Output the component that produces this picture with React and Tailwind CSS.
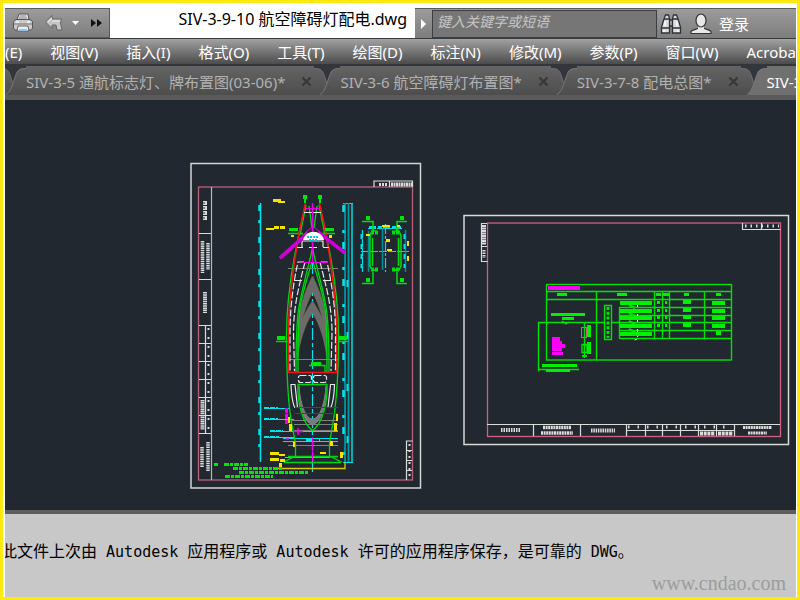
const menus = ['(E)', '视图(V)', '插入(I)', '格式(O)', '工具(T)', '绘图(D)', '标注(N)', '修改(M)', '参数(P)', '窗口(W)', 'Acrobat']

const tabs = [
  { name: 'SIV-3-5 通航标志灯、牌布置图(03-06)*' },
  { name: 'SIV-3-6 航空障碍灯布置图*' },
  { name: 'SIV-3-7-8 配电总图*' },
  { name: 'SIV-3-9', active: true },
]

function PrinterIcon() {
  return (
    <svg width="22" height="22" viewBox="0 0 22 22" fill="none">
      <path d="M5 8 7 2h9l1 6" fill="#e2e2e2" stroke="#555" />
      <path d="M8 4h6M7 6h8" stroke="#888" />
      <path d="M1.500 9.500 4 7.500h14l2.500 2v7l-2 1.500h-15l-2-1.500z" fill="#cacaca" stroke="#555" />
      <path d="M2 12h18" stroke="#777" />
      <path d="M4 10h3M15 10h3" stroke="#eee" strokeWidth="2" />
      <path d="M6 14h10l1 5H5z" fill="#eee" stroke="#666" />
      <path d="M7 18h8" stroke="#8fc7ee" strokeWidth="2" />
    </svg>
  )
}

function UndoIcon() {
  return (
    <svg width="20" height="20" viewBox="0 0 20 20" fill="none">
      <path d="M1.500 9 8 2.500V6h9.500l-1 4 1.500 7h-5l-1-5H8v3.500z" fill="#c4c4c4" stroke="#666" />
      <path d="M4 9l4-4M8 8h8" stroke="#eee" />
    </svg>
  )
}

function BinocularsIcon() {
  return (
    <svg width="22" height="22" viewBox="0 0 22 22" fill="#dcdcdc" stroke="#2e3238" strokeWidth="1.300">
      <path d="M8 7h6v6H8z" fill="#aaa" />
      <path d="M4 6 5.500 2h3L9.500 6v14H1.500v-6z" />
      <path d="M18 6 16.500 2h-3L12.500 6v14h8v-6z" />
      <path d="M2 15h7.500M12.500 15h8M4 6h5.500M12.500 6H18" fill="none" />
      <path d="M5 8v5M17 8v5M4 17v2M18 17v2" stroke="#fff" />
    </svg>
  )
}

function UserIcon() {
  return (
    <svg width="22" height="22" viewBox="0 0 22 22" fill="#e8e8e8" stroke="#333" strokeWidth="1.200">
      <path d="M1 20.500v-2c1.500-2 4.500-2 6.500-3h7c2 1 5 1 6.500 3v2z" />
      <path d="M8 12h6v4l-3 2-3-2z" stroke="none" />
      <ellipse cx="11" cy="7.500" rx="5" ry="6.500" />
    </svg>
  )
}

// dark notch between two document tabs
function TabNotch({ active }) {
  return (
    <svg className="shrink-0" width="26" height="31" viewBox="0 0 26 31" fill="none">
      {active && <path d="M26 3c-8 0-9 3-11 9-3 8-4 14-9 19h20z" fill="#707070" />}
      <path d="M0 0h26v3c-8 0-9 3-11 9l-2 5-2-5C9 6 8 3 0 3z" fill="#33363b" />
      <path d="M26 3.500c-8 0-9 3-11 9-3 8-4 14-9 17" stroke="#797979" />
      <path d="M0 3.500c8 0 9 3 11 9l1 5" stroke="#6c6c6c" />
    </svg>
  )
}

function CloseIcon() {
  return (
    <svg width="11" height="11" viewBox="0 0 11 11" stroke="#383838" strokeWidth="2.400">
      <path d="M1.500 1.500l8 8M9.500 1.500l-8 8" />
    </svg>
  )
}

// bars: [x, y, width, height]
function Bars({ items, fill }) {
  return items.map(([x, y, w, h], i) => <rect key={i} x={x} y={y} width={w} height={h} fill={fill} />)
}

const elevationNotes = [
  [214, 463, 4, 3], [224, 463, 24, 3], [233, 467, 50, 3], [239, 471, 70, 3], [225, 475, 48, 3],
]
const yellowLabels = [
  [273, 199, 8, 3], [278, 201, 7, 2], [266, 228, 8, 2], [274, 226, 5, 3], [280, 226, 5, 3],
  [270, 452, 9, 3], [279, 454, 6, 2], [270, 458, 9, 3], [280, 459, 5, 3], [279, 463, 3, 4],
  [288, 417, 2, 6], [289, 424, 3, 7], [293, 442, 2, 5], [336, 414, 2, 7], [334, 423, 3, 8],
  [330, 441, 3, 5], [320, 452, 6, 2], [340, 452, 3, 6],
]

function TowerSheet() {
  return (
    <g fill="none">
      <rect x="191" y="163.500" width="229.500" height="324.500" stroke="#d4d4d4" strokeWidth="1.500" />
      <rect x="198.500" y="187" width="214" height="293" stroke="#b8607a" strokeWidth="1.300" />

      {/* title block */}
      <g stroke="#dcdcdc" strokeWidth="1.200">
        <path d="M211.500 187v293" stroke="#b8b8b8" />
        <path d="M199 233.500h12M199 279.500h12M199 325.500h12M199 343.500h12M199 361.500h12M199 379.500h12M199 397.500h12M199 415.500h12M199 433.500h12M205.500 325v108" />
        <path d="M374 187v-6h38.500v6M389.500 181v6" />
        <path d="M406.500 480v-39h6M406 450.500h6M406 460.500h6M406 470.500h6" />
        <path d="M204 201v19" strokeWidth="2" strokeDasharray="1.500 1" />
        <path d="M206 201v19" strokeWidth="2" strokeDasharray="4 1" />
        <path d="M202.500 241v32M208 243v27" strokeWidth="3.500" strokeDasharray="1.500 .7" />
        <path d="M205 292v21" strokeWidth="4" strokeDasharray="1.500 .7" />
        <path d="M202.500 400v30" strokeWidth="4" strokeDasharray="1.500 .6" />
        <path d="M202 447v20M208 442v30" strokeWidth="3.500" strokeDasharray="1.500 .8" />
        <path d="M208.500 328v104" strokeWidth="2" strokeDasharray="2 7" />
        <path d="M379 184.500h8" strokeWidth="3" strokeDasharray="2 1" />
        <path d="M391 184.500h21" strokeWidth="4" strokeDasharray="2 .5" />
        <path d="M409.500 444v34" strokeWidth="2" strokeDasharray="2 4" />
      </g>

      {/* height dimensions */}
      <g stroke="#00e5ec">
        <path d="M260.500 203v259" strokeWidth="1.500" />
        <path d="M259.500 205v255" strokeWidth="2.500" strokeDasharray="6 9 3 14" />
        <path d="M343 203.500h10M343 462.500h10" />
        <path d="M345 203v259M348.500 203v259" stroke="#009aa2" strokeWidth="1.700" />
        <path d="M352 203v259" strokeWidth="1.400" />
        <path d="M343.500 205v255" strokeWidth="2.500" strokeDasharray="7 18 3 9" />
        <path d="M347.500 280v170" strokeWidth="2" strokeDasharray="7 45" />
        <path d="M312.500 262v210" strokeDasharray="12 3 4 3" strokeWidth="1.200" />
        <path d="M264 408.500h26M264 419.500h30M270 431.500h68M264 437.500h30M283 441.500h55M283 438.500h55M285 457.500h45" />
        <path d="M264 408h14M264 419h14M270 431h13M264 437h15" strokeWidth="2" strokeDasharray="5 1" />
        <path d="M306 440h14M290 457h40" strokeWidth="2" strokeDasharray="7 6" />
      </g>

      <g stroke="#808080">
        <path d="M288 268.500h50M288 359.500h50M292 420.500h46M294 424.500h44M294 430.500h44M288 445.500h50" />
        <path d="M312.500 276C306 289 300 304 298 324v14c3-15 7-32 14.500-46C320 306 324 323 327 338v-14c-2-20-8-35-14.500-48z" fill="#6b6b6b" stroke="#76764a" strokeWidth=".6" />
        <path d="M312.500 301C305 312 299 324 297.500 337v22c2-17 7-34 15-46 8 12 12.500 29 14.500 46v-22c-1.500-13-7-25-14.500-36z" fill="#6b6b6b" stroke="#76764a" strokeWidth=".6" />
        <path d="M299 386c0 20 5 38 13.500 38S326 406 326 386c-1 16-6 33-13.500 33S300 402 299 386z" fill="#7c7c7c" />
      </g>

      {/* hull */}
      <g stroke="#00d610" strokeWidth="1.300">
        <path d="M305 208c-7 28-18.500 82-18.500 127 0 32 1 64 5 88l4 20v13l-12 6" />
        <path d="M320 208c7 28 18.500 82 18.500 127 0 32-1.500 64-5.500 88l-3.500 20v13l12 6" />
        <path d="M312.500 248c-3 15-12 46-14 62-2 14-2.500 25-2.500 62M312.500 248c3 15 12 46 14 62 2 14 2.500 25 2.500 62" />
        <path d="M312 262c-3 10-10 32-12 46-2 16-2 40-2 64M313 262c3 10 10 32 12 46 2 16 2 40 2 64" />
        <path d="M309 206l3 22M317 206l-3 22M306 205l-6 30M319 205l6 30" />
        <path d="M298 384.500h29c1 18-5 40-14.500 46-9.500-6-15.500-28-14.500-46z" />
        <path d="M284 462.500h57M288 456.500h50M276 341.500h12M338 341.500h10M288 233.500h15M322 233.500h13" />
        <path d="M309 365.500h16v7" />
      </g>
      <path d="M305.500 203C296 243 288.500 296 288.500 333v39.500h48V333c0-37-7.500-90-17-130" stroke="#f21414" strokeWidth="1.600" />

      <g stroke="#e6e6e6" strokeWidth="1.200">
        <path d="M304 212.500h17M302 247v-6h21v6M297 247.500h6M323 247.500h6M309 247.500h8" />
        <path d="M304 262h-6c-5 22-8 47-8 71v38M321 262h6c5 22 8.500 47 8.500 71v38" strokeDasharray="7 2" />
        <path d="M305 262c-6 24-11.500 44-11.500 71l1 38M320 262c6 24 12 44 12 71l-1 38" strokeDasharray="7 2" />
        <path d="M294 280.500h8M323 280.500h8" />
        <rect x="298.500" y="375.500" width="13" height="7" rx="2" strokeDasharray="6 2" />
        <rect x="313.500" y="375.500" width="13" height="7" rx="2" strokeDasharray="6 2" />
        <path d="M291 384.500h4l2.500 23h-2.500c-2-2-4-15-4-23zM334.500 384.500h-4l-2.500 23h2.500c2-2 4-15 4-23z" />
      </g>

      {/* beacon */}
      <g stroke="#ec00ec">
        <path d="M280 258l28-25M345 253l-27-21" stroke="#b000b8" strokeWidth="4" />
        <path d="M280 258l28-25M345 253l-27-21" strokeDasharray="1 1" strokeWidth="3" />
        <path d="M312.500 203v59" strokeWidth="1.500" />
        <path d="M302 262.500h26M306 208.500h14M312.500 437v24M303 235l10-9 10 9" />
        <path d="M295 407.500h43M295 413.500h43" stroke="#a800a8" />
        <path d="M286.500 408v16" strokeWidth="3" strokeDasharray="5 1" />
        <path d="M294 431.500h9M298 428v7M286 439h3" strokeWidth="1.500" />
      </g>
      <path d="M303 240c3-11 18-11 21 0z" fill="#fff" />
      <path d="M307 237h12M309 240h8" stroke="#00ccdd" strokeWidth="2" strokeDasharray="2 1" />

      <Bars items={yellowLabels} fill="#f5e400" />
      <Bars items={[[291, 235, 3, 2], [329, 235, 3, 3]]} fill="#f5e400" />
      <path d="M278 468.500h67v-6" stroke="#d8cc00" strokeWidth="1.300" />
      <Bars items={[[289, 228, 9, 3], [325, 228, 9, 3], [277, 336, 8, 4], [339, 336, 8, 4], [303, 195, 4, 4], [304, 199, 2, 4], [318, 195, 4, 4], [319, 199, 2, 4], [311, 362, 10, 4]]} fill="#00e608" />
      {elevationNotes.map(([x, y, w, h]) => (
        <path key={y + '-' + x} d={`M${x} ${y + 1.5}h${w}`} stroke="#00e608" strokeWidth={h} strokeDasharray="5 1 3 1" />
      ))}

      {/* plan section */}
      <g stroke="#00dfe8" strokeWidth="1.200">
        <path d="M368 228.500h34M361 251.500h48M362.500 230v42" strokeDasharray="8 1" />
        <path d="M368.500 231v41M382.500 228v42M405.500 230v42" stroke="#00909a" strokeWidth="1.500" />
        <path d="M385.500 224v48" strokeDasharray="10 2 3 2" />
        <path d="M369 227.500h32" strokeWidth="3" strokeDasharray="7 2 4 1" />
        <path d="M361.500 234v34M404.500 234v34" strokeWidth="2" strokeDasharray="5 5" />
      </g>
      <g stroke="#00dc0c" strokeWidth="1.500">
        <path d="M362 221.500h11V231M407 221.500H397V231M362 283.500h11V272M407 283.500H397V272" />
        <path d="M375 231h-3l-2 5v30l2 4h3M395 231h4l2 5v30l-2 4h-4M372.500 238v28M398.500 238v28" />
        <path d="M371 232.500h8M392 232.500h8M371 269.500h8M392 269.500h8" strokeWidth="4" strokeDasharray="3 1" />
      </g>
      <Bars items={[[366, 216, 4, 4], [400, 216, 4, 4], [366, 278, 4, 4], [400, 278, 4, 4]]} fill="#00e608" />
      <Bars items={[[382, 225, 8, 2], [386, 239, 4, 3], [387, 249, 5, 2], [407, 241, 2, 5], [407, 256, 2, 5], [366, 234, 4, 2], [397, 225, 3, 2]]} fill="#f5e400" />
    </g>
  )
}

const rowTops = [301, 309, 316, 324, 332]

function WiringSheet() {
  return (
    <g fill="none">
      <rect x="464" y="215.500" width="324.500" height="229" stroke="#d8d8d8" strokeWidth="1.500" />
      <rect x="487.500" y="223" width="293" height="213.500" stroke="#cf6080" strokeWidth="1.300" />
      <g stroke="#dcdcdc" strokeWidth="1.200">
        <path d="M487 223.500h-5.500v38h6M481 246.500h6M742.500 223v6.500h38M761.500 223v6" />
        <path d="M487 424.500h293M533.500 424v12M580.500 424v12M626.500 424v12M626 430.500h108M645.500 424v12M662.500 424v12M680.500 424v12M698.500 424v12M716.500 424v12M734.500 424v12" />
        <path d="M484 225v20" strokeWidth="4" strokeDasharray="2 .5" />
        <path d="M484 250v8" strokeWidth="3" strokeDasharray="1.500 1" />
        <path d="M745 226h34" strokeWidth="3" strokeDasharray="1.500 4" />
        <path d="M501 430h19" strokeWidth="4" strokeDasharray="1.500 1" />
        <path d="M543 427.500h28M541 433h32" strokeWidth="3.500" strokeDasharray="2 .6" />
        <path d="M591 430.500h24" strokeWidth="4" strokeDasharray="1.500 .8" />
        <path d="M628 427h104" strokeWidth="3" strokeDasharray="1.500 8" />
        <path d="M700 433.500h15M718 433.500h15" strokeWidth="4" strokeDasharray="3 .7" />
        <path d="M743 427.500h29M748 433h19" strokeWidth="3" strokeDasharray="2 .6" />
      </g>
      <g stroke="#00e200" strokeWidth="1.400">
        <rect x="546.500" y="284.500" width="185" height="75.500" />
        <path d="M546 291.500h185M546 299.500h185M596.500 291v69M654.500 291v47M662.500 291v47M669.500 291v47M704.500 291v47" />
        <path d="M619 307.500h112M619 315.500h112M619 322.500h112M619 330.500h112M619 338.500h112M619.500 307v31" />
        <path d="M604 322.500h-65.500v49M538 369.500h41M584.500 322v36M604.500 305.500h7v34h-7zM611 322.500h8" />
        <path d="M562 321l4 3 3-2M582 344.500h5v8h-5z" />
        <path d="M608 307v31" strokeWidth="3" strokeDasharray="3 1.800" />
        <path d="M629 305l6 3M629 313l6 3M629 321l6 3M629 329l6 3M582 356h5" strokeWidth="2" />
      </g>
      <path d="M637.500 304v34q0 2-4 2" stroke="#ddd" strokeDasharray="3 2" />
      <rect x="581.500" y="327.500" width="5" height="10" stroke="#cf6080" />
      <Bars
        items={[
          [557, 293, 10, 3], [617, 293, 10, 3], [656, 293, 5, 3], [663, 293, 6, 3], [684, 293, 5, 3], [716, 293, 5, 3],
          [551, 313, 34, 3], [562, 317, 12, 3], [542, 364, 35, 3], [546, 369, 24, 3],
          [587, 325, 4, 12], [587, 342, 4, 12], [716, 331, 5, 4],
        ]}
        fill="#00f000"
      />
      {rowTops.map((y, i) => (
        <g key={y}>
          <Bars items={[[620, y, 32, 4]]} fill="#00f000" />
          {i < 4 && <Bars items={[[657, y, 3, 3], [665, y, 2, 3], [683, y - 1, 8, 4], [712, y, 13, 4]]} fill="#00f000" />}
        </g>
      ))}
      <Bars items={[[548, 286, 32, 4], [552, 337, 8, 4], [552, 341, 10, 10], [560, 344, 5, 4], [552, 352, 11, 3]]} fill="#ff00ff" />
    </g>
  )
}

export default function App() {
  return (
    <main className="flex min-h-screen flex-col overflow-hidden border-[3px] border-[#fde910] bg-white pr-px pl-0.5 font-['Noto_Sans','Noto_Sans_CJK_SC',sans-serif] text-[15px] leading-5">
      <header className="mt-[5px] flex h-[30px] shrink-0 items-stretch whitespace-nowrap">
        <div className="flex w-[105px] items-center border border-l-0 border-[#5a5a5a] bg-linear-to-b from-[#9c9c9c] to-[#7d7d7d] pl-[7px]">
          <button aria-label="打印"><PrinterIcon /></button>
          <button aria-label="放弃" className="ml-2.5"><UndoIcon /></button>
          <button aria-label="放弃列表" className="ml-2">
            <svg width="7" height="5" viewBox="0 0 7 5" fill="#fff"><path d="M0 0h7L3.500 4z" /></svg>
          </button>
          <button aria-label="更多" className="ml-3">
            <svg width="11" height="8" viewBox="0 0 11 8" fill="#111"><path d="M0 0l5 4-5 4zM6 0l5 4-5 4z" /></svg>
          </button>
        </div>
        <h1 className="w-[305px] flex-none pt-px pr-2 text-right text-[16px]">SIV-3-9-10 航空障碍灯配电.dwg</h1>
        <div className="flex flex-1 items-center border-t border-[#5a5a5a] bg-linear-to-b from-[#9c9c9c] to-[#7d7d7d]">
          <button aria-label="展开搜索" className="flex w-[17px] justify-center">
            <svg width="6" height="10" viewBox="0 0 6 10" fill="#fff"><path d="M0 0l5 5-5 5z" /></svg>
          </button>
          <input
            aria-label="搜索"
            placeholder="键入关键字或短语"
            className="h-7 w-[225px] border border-[#3c3e42] bg-[#767676] px-1 pb-1 text-[14px] italic text-white outline-none placeholder:text-[#c6c6c6]"
          />
          <button aria-label="查找" className="ml-[3px]"><BinocularsIcon /></button>
          <button className="ml-2 flex items-center gap-[7px] text-white">
            <UserIcon />
            登录
          </button>
        </div>
      </header>

      <nav className="flex h-[26px] shrink-0 items-center gap-7 overflow-hidden border-t border-[#3a3c40] bg-linear-to-b from-[#a2a2a2] to-[#4c4c4c] whitespace-nowrap text-white">
        {menus.map((m) => (
          <button key={m} className="shrink-0">{m}</button>
        ))}
      </nav>

      <div className="h-9 shrink-0 overflow-hidden border-b-[5px] border-[#5a5a5a] bg-linear-to-b from-[#666] to-[#4d4d4d] whitespace-nowrap">
        <div className="-ml-[5px] flex h-full border-t-2 border-[#33363b]">
          {tabs.map((tab) => (
            <div key={tab.name} className="flex h-full shrink-0 items-center">
              <TabNotch active={tab.active} />
              <div className={`flex h-full items-center pt-0.5 ${tab.active ? 'bg-[#707070] text-white' : 'text-[#b2b2b2]'}`}>
                <button>{tab.name}</button>
                <button aria-label="关闭" className="mr-0.5 ml-4"><CloseIcon /></button>
              </div>
            </div>
          ))}
        </div>
      </div>

      <svg className="block h-auto w-full bg-[#212830]" viewBox="5 100 791 410" role="img" aria-label="图纸">
        <TowerSheet />
        <WiringSheet />
      </svg>

      <footer className="flex flex-1 flex-col justify-between overflow-hidden border-t-4 border-[#5e5e5e] bg-[#c8c8c8] pt-7">
        <p className="-indent-1 font-['DejaVu_Sans_Mono','Noto_Sans_CJK_SC',monospace] text-[16px] whitespace-nowrap text-black">
          此文件上次由<span className="text-[15px]"> Autodesk </span>应用程序或<span className="text-[15px]"> Autodesk </span>
          许可的应用程序保存，是可靠的<span className="text-[15px]"> DWG</span>。
        </p>
        <p className="pr-2.5 pb-1 text-right font-['Liberation_Serif',serif] text-[20px] text-[#9c9c9c]">www.cndao.com</p>
      </footer>
    </main>
  )
}
